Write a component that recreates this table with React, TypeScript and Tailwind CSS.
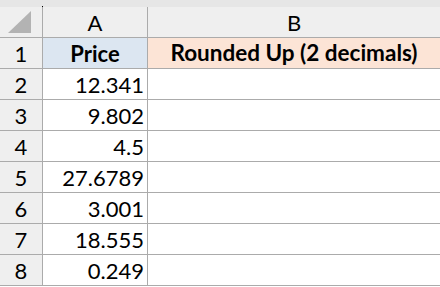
const prices = ['12.341', '9.802', '4.5', '27.6789', '3.001', '18.555', '0.249'];

const font = { fontFamily: 'Lato, "Open Sans", sans-serif' };

export default function App() {
  return (
    <div className="w-[440px] h-[287px] bg-white overflow-hidden text-[22px] text-black" style={font}>
      <div className="h-[7px] bg-[#e6e6e6] relative">
        <span className="absolute left-[42px] bottom-0 w-px h-px bg-black" />
      </div>
      <div className="grid grid-cols-[43px_105px_1fr]">
        {/* header row */}
        <div className="h-[31px] bg-[#efefef] border-r border-b border-[#ababab] flex items-center justify-center">
          <svg width="24" height="23" viewBox="0 0 24 23" className="ml-[-2px]">
            <polygon points="23,0 23,22 0,22" fill="#b3b3b3" />
          </svg>
        </div>
        <div className="h-[31px] bg-[#efefef] border-r border-b border-[#ababab] flex items-center justify-center">A</div>
        <div className="h-[31px] bg-[#efefef] border-b border-[#ababab] flex items-center justify-center">B</div>

        {/* row 1 */}
        <div className="h-[31px] bg-[#efefef] border-r border-b border-[#ababab] flex items-center justify-center">1</div>
        <div className="h-[31px] bg-[#dce6f1] border-r border-b border-[#ababab] flex items-center justify-center font-bold">Price</div>
        <div className="h-[31px] bg-[#fce4d6] border-b border-[#ababab] flex items-center justify-center font-bold text-[22.5px]">Rounded Up (2 decimals)</div>

        {prices.map((p, i) => (
          <div key={i} className="contents">
            <div className="h-[31px] bg-[#efefef] border-r border-b border-[#ababab] flex items-center justify-center">{i + 2}</div>
            <div className="h-[31px] border-r border-b border-[#ababab] flex items-center justify-end pr-[3px]">{p}</div>
            <div className="h-[31px] border-b border-[#ababab]" />
          </div>
        ))}
      </div>
    </div>
  );
}
